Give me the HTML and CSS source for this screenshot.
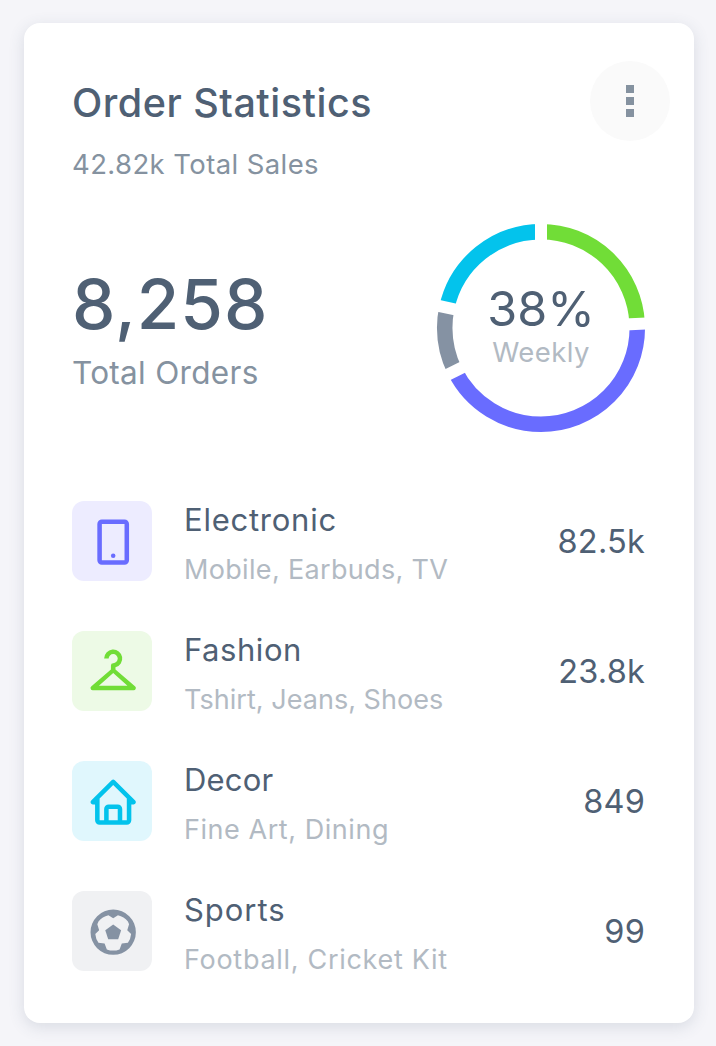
FILE: index.html
```html
<!DOCTYPE html>
<html lang="en">
<head>
<meta charset="utf-8">
<title>Order Statistics</title>
<link rel="stylesheet" href="styles.css">
</head>
<body>
<main class="card">
  <header class="card-header">
    <div>
      <h1 class="title">Order Statistics</h1>
      <p class="subtitle">42.82k Total Sales</p>
    </div>
    <button class="menu" aria-label="More options"><i class="dot"></i><i class="dot"></i><i class="dot"></i></button>
  </header>
  <section class="summary">
    <div class="total">
      <div class="total-value">8,258</div>
      <div class="total-label">Total Orders</div>
    </div>
    <div class="chart">
      <svg class="ring" viewBox="-105 -105 210 210" fill="none">
        <g stroke-width="15.5" transform="rotate(-90)">
          <circle r="96.3" pathLength="360" stroke="#71dd37" stroke-dasharray="87 273"/>
          <circle r="96.3" pathLength="360" stroke="#696cff" stroke-dasharray="156.4 203.6" stroke-dashoffset="-87"/>
          <circle r="96.3" pathLength="360" stroke="#8592a3" stroke-dasharray="38.8 321.2" stroke-dashoffset="-243.4"/>
          <circle r="96.3" pathLength="360" stroke="#03c3ec" stroke-dasharray="77.8 282.2" stroke-dashoffset="-282.2"/>
        </g>
        <g stroke="#fff" stroke-width="12">
          <path d="M0-84V-106"/>
          <path d="M0-84V-106" transform="rotate(87.6)"/>
          <path d="M0-84V-106" transform="rotate(243.4)"/>
          <path d="M0-84V-106" transform="rotate(282.2)"/>
        </g>
      </svg>
      <div class="chart-text">
        <div class="percent">38%</div>
        <div class="period">Weekly</div>
      </div>
    </div>
  </section>
  <ul class="list">
    <li class="row electronic">
      <span class="icon"><svg viewBox="0 0 24 24"><path d="M17 2H7c-1.103 0-2 .897-2 2v16c0 1.103.897 2 2 2h10c1.103 0 2-.897 2-2V4c0-1.103-.897-2-2-2zM7 20V4h10l.002 16H7z"/><circle cx="12" cy="18" r="1"/></svg></span>
      <div class="text"><h2 class="name">Electronic</h2><p class="detail">Mobile, Earbuds, TV</p></div>
      <span class="value">82.5k</span>
    </li>
    <li class="row fashion">
      <span class="icon"><svg viewBox="0 0 24 24"><path fill-rule="evenodd" d="M21.6 18.2 13 10.8v-.93A4 4 0 1 0 8 6h2a2 2 0 1 1 2 2 1 1 0 0 0-1 1v1.8L2.4 18.2A1 1 0 0 0 3 20h18a1 1 0 0 0 .6-1.8zM5.7 18l6.3-5.7 6.3 5.7z"/></svg></span>
      <div class="text"><h2 class="name">Fashion</h2><p class="detail">Tshirt, Jeans, Shoes</p></div>
      <span class="value">23.8k</span>
    </li>
    <li class="row decor">
      <span class="icon"><svg viewBox="0 0 24 24"><path d="M3 13h1v7c0 1.103.897 2 2 2h12c1.103 0 2-.897 2-2v-7h1a1 1 0 0 0 .707-1.707l-9-9a.999.999 0 0 0-1.414 0l-9 9A1 1 0 0 0 3 13zm7 7v-5h4v5h-4zm2-15.586 6 6V15l.001 5H16v-5c0-1.103-.897-2-2-2h-4c-1.103 0-2 .897-2 2v5H6v-9.586l6-6z"/></svg></span>
      <div class="text"><h2 class="name">Decor</h2><p class="detail">Fine Art, Dining</p></div>
      <span class="value">849</span>
    </li>
    <li class="row sports">
      <span class="icon"><svg viewBox="0 0 24 24"><path fill-rule="evenodd" d="M12 2a10 10 0 1 0 0 20 10 10 0 0 0 0-20zM12 5.9l2.1-1.4a8 8 0 0 1 4.4 2.8l.5 1.2-.8 2.6 1.7 1.7a8 8 0 0 1-1.4 3.9l-2.7.3-1 2.6a8 8 0 0 1-5.6 0l-1-2.6-2.7-.3a8 8 0 0 1-1.4-3.9l1.7-1.7-.8-2.6.5-1.2a8 8 0 0 1 4.4-2.8z"/><path d="m12 8.6 3.5 2.5-1.3 4H9.8l-1.3-4z"/></svg></span>
      <div class="text"><h2 class="name">Sports</h2><p class="detail">Football, Cricket Kit</p></div>
      <span class="value">99</span>
    </li>
  </ul>
</main>
</body>
</html>
```
FILE: styles.css
```css
* { box-sizing: border-box; margin: 0; padding: 0; }
body {
  background: #f5f5f9;
  font-family: Inter, "Liberation Sans", sans-serif;
  color: #4f6074;
  padding: 23px 22px 23px 24px;
}
.card {
  height: 1000px;
  background: #fff;
  border-radius: 16px;
  box-shadow: 0 4px 16px rgba(67, 89, 113, .16);
}
.card-header {
  display: flex;
  justify-content: space-between;
  padding: 38px 24px 0 48px;
  height: 201px;
}
.title { margin-top: 18px; font-size: 39.5px; line-height: 48px; font-weight: 500; letter-spacing: .5px; white-space: nowrap; }
.subtitle { margin-top: 17px; font-size: 27.5px; line-height: 40px; letter-spacing: .4px; color: #8592a0; white-space: nowrap; }
.menu {
  width: 80px;
  height: 80px;
  border: 0;
  border-radius: 50%;
  background: #fafafa;
  display: flex;
  flex-direction: column;
  align-items: center;
  justify-content: center;
  gap: 4px;
}
.dot { width: 8px; height: 8px; background: #8592a0; }
.summary {
  display: flex;
  justify-content: space-between;
  align-items: center;
  height: 208px;
  padding: 0 48px;
}
.total { padding-top: 6px; }
.total-value { font-size: 69px; line-height: 74px; font-weight: 500; letter-spacing: 1px; margin-bottom: 9px; }
.total-label { font-size: 31.5px; line-height: 46px; letter-spacing: .3px; color: #8592a0; }
.chart { display: grid; place-items: center; width: 210px; }
.ring, .chart-text { grid-area: 1 / 1; }
.ring { width: 210px; height: 210px; }
.chart-text { text-align: center; padding-bottom: 5px; }
.percent { font-size: 48.5px; line-height: 52px; }
.period { margin-top: 1px; font-size: 27.5px; line-height: 32px; letter-spacing: .4px; color: #b2bac3; }
.list {
  list-style: none;
  display: flex;
  flex-direction: column;
  gap: 50px;
  padding: 69px 49px 0 48px;
}
.row { display: flex; height: 80px; }
.icon {
  width: 80px;
  height: 80px;
  border-radius: 12px;
  display: grid;
  place-items: center;
  padding: 2px 0 0 2px;
}
.icon svg { width: 54.4px; height: 54.4px; fill: currentColor; display: block; }
.text { flex: 1; margin: -3px 0 0 32px; white-space: nowrap; }
.name { font-size: 31px; line-height: 44px; font-weight: 400; }
.detail { margin-top: 8px; font-size: 27px; line-height: 40px; color: #b2bac3; }
.value { padding-top: 1px; font-size: 32.5px; line-height: 80px; letter-spacing: .2px; }

.electronic .icon { background: #edecff; color: #696cff; }
.electronic .name { letter-spacing: .75px; }
.electronic .detail { letter-spacing: .33px; }

.fashion .icon { background: #edfae6; color: #71dd37; }
.fashion .name { letter-spacing: .55px; }
.fashion .detail { letter-spacing: .03px; }

.decor .icon { background: #e0f7fd; color: #03c3ec; }
.decor .name { letter-spacing: .2px; }
.decor .detail { letter-spacing: .55px; }

.sports .icon { background: #f0f1f3; color: #8592a3; }
.sports .name { letter-spacing: .95px; }
.sports .detail { letter-spacing: .7px; }
```
